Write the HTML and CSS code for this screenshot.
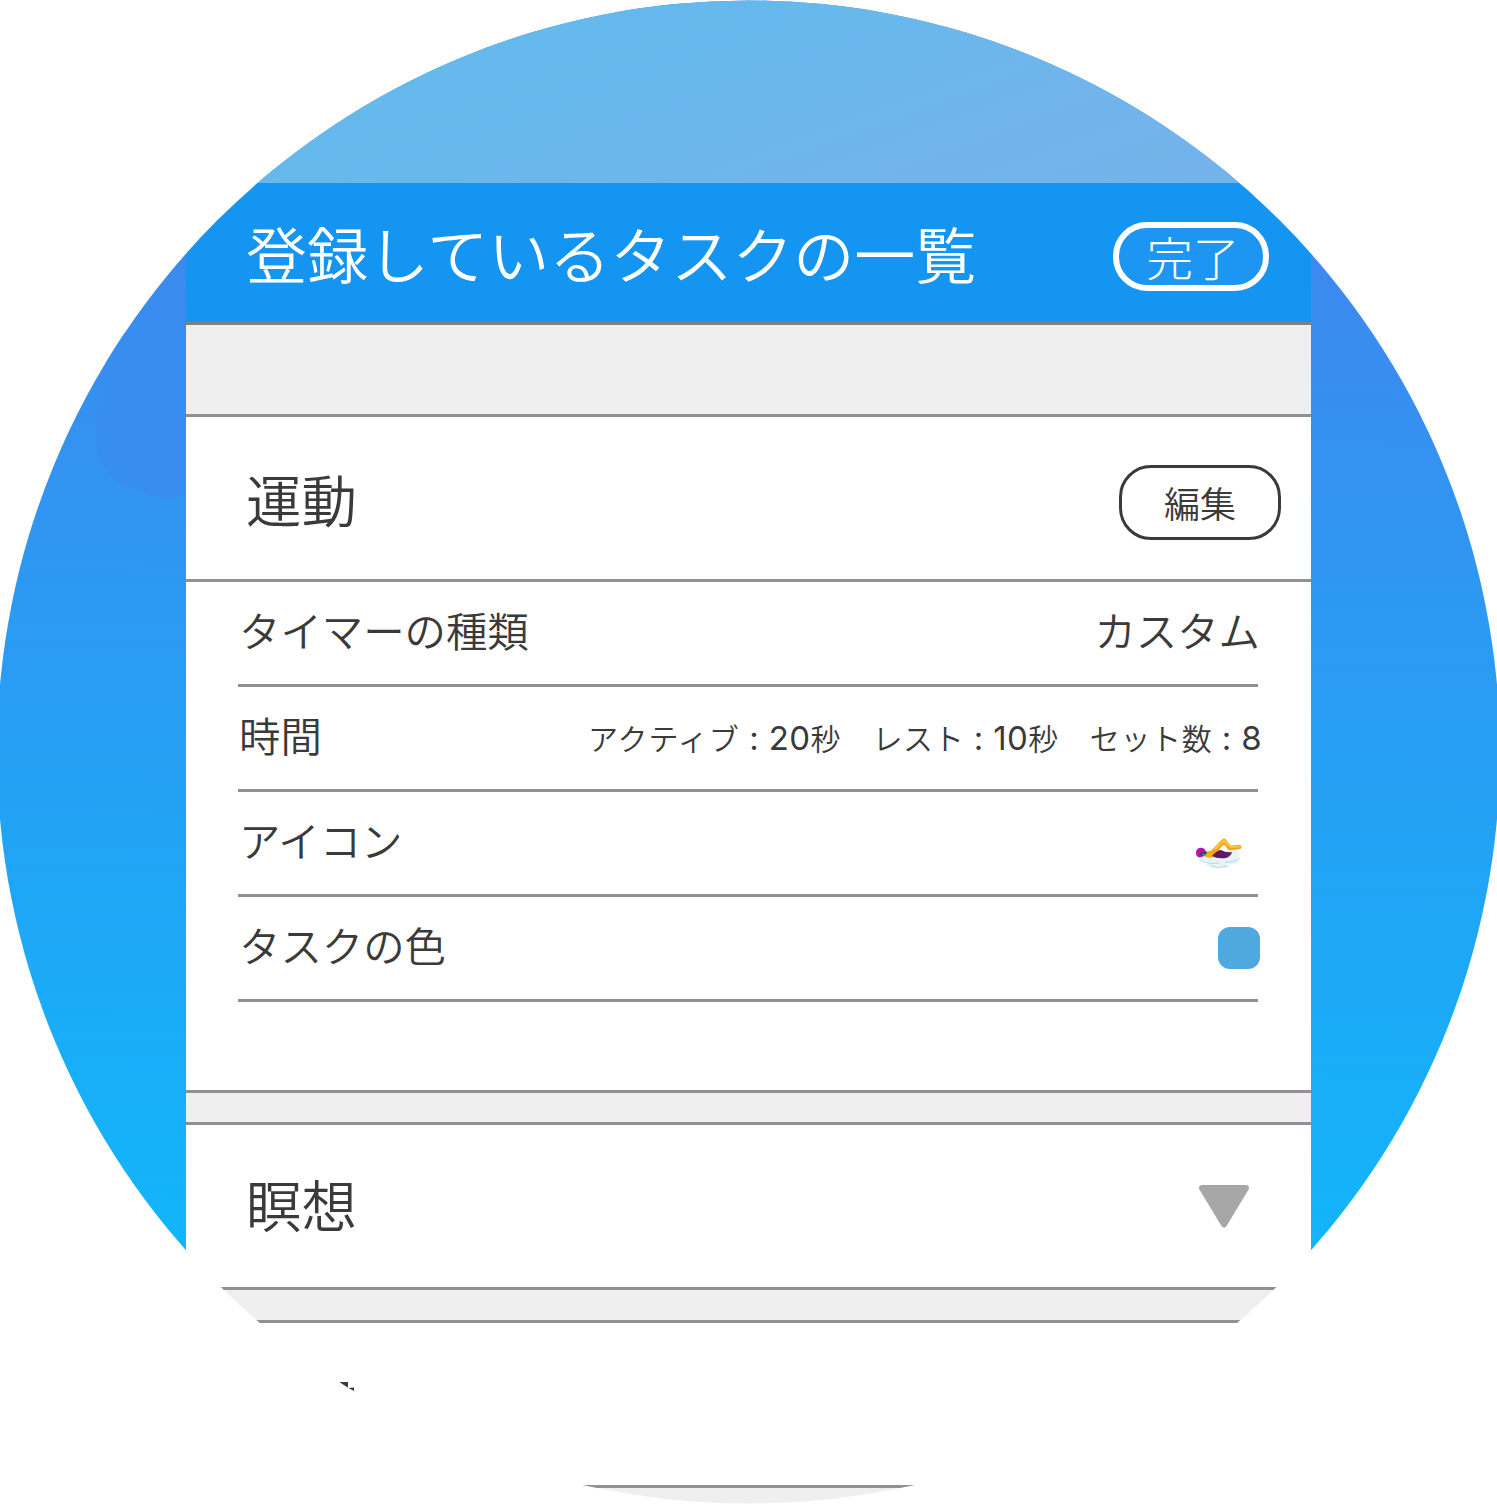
FILE: index.html
```html
<!DOCTYPE html>
<html lang="ja">
<head>
<meta charset="utf-8">
<title>登録しているタスクの一覧</title>
<link rel="stylesheet" href="styles.css">
</head>
<body>
<div class="stage">
  <svg class="blob" viewBox="0 0 90 200" aria-hidden="true"><path d="M14 0C8 50 0 60 0 100C0 128 14 150 34 154C44 153 48 165 70 166C80 166 84 162 90 161V0Z"/></svg>
  <div class="status"></div>
  <main class="phone">
    <header class="bar">
      <h1>登録しているタスクの一覧</h1>
      <button class="done">完了</button>
    </header>
    <div class="gap gap-top"></div>
    <section class="task">
      <div class="task-head"><h2>運動</h2><button class="edit">編集</button></div>
      <div class="details">
        <div class="row"><span class="label">タイマーの種類</span><span class="value">カスタム</span></div>
        <div class="row"><span class="label">時間</span>
          <span class="times"><span class="active">アクティブ<b class="colon">:</b><b>20</b>秒</span><span>レスト<b class="colon">:</b><b>10</b>秒</span><span>セット数<b class="colon">:</b><b>8</b></span></span></div>
        <div class="row"><span class="label">アイコン</span>
          <svg class="swimmer" viewBox="0 0 46 32" aria-hidden="true">
            <path d="M1 19Q8 16 13 18L35 12Q44 13 44 17Q39 21 44 24Q38 27 30 26Q36 29 30 30Q15 31 8 26Q12 26 14 24Q4 23 1 19Z" fill="#e6f3f8"/>
            <path d="M4 22Q13 27 23 25M14 28Q22 31 31 28M29 24Q38 25 44 20" fill="none" stroke="#b9d9e6" stroke-width="1"/>
            <path d="M9 13L17 13L23 11L26 14L18 19Q12 21 8 18Z" fill="#f7ad18"/>
            <path d="M17 14L28 3L34 10L43 9" fill="none" stroke="#f2a41a" stroke-width="4.6" stroke-linecap="round" stroke-linejoin="round"/>
            <path d="M19 11L28 2.5L34.500 9L43 8.500" fill="none" stroke="#ffc832" stroke-width="1.800" stroke-linecap="round" stroke-linejoin="round"/>
            <path d="M16 18Q20 13 25 12Q30 15 36 14Q35 18 30 20Q21 21 16 18Z" fill="#60195f"/>
            <path d="M0 14Q1 9 7 10Q11 12 9 17Q6 20 2 19Q0 18 0 14Z" fill="#bd10ad"/>
            <path d="M4 16L9 13L11 15L8 18L4 17Z" fill="#28435b"/><path d="M6 17L8 15L9 18Z" fill="#2eb7ca"/>
          </svg></div>
        <div class="row"><span class="label">タスクの色</span><span class="swatch"></span></div>
      </div>
    </section>
    <div class="gap gap-mid"></div>
    <section class="task collapsed">
      <div class="task-head"><h2>瞑想</h2>
        <svg class="chevron" viewBox="0 0 50 43" aria-hidden="true"><path d="M3 3H47L25 39.5Z" fill="#a7a7a7" stroke="#a7a7a7" stroke-width="6" stroke-linejoin="round"/></svg></div>
    </section>
    <div class="gap gap-low"></div>
    <section class="task next">
      <svg class="fragment" viewBox="0 0 20 12" aria-hidden="true"><path d="M0 0H9V6Z M9 6L15 5.5V9Z" fill="#3a3a3a"/></svg>
    </section>
    <div class="gap gap-end"></div>
  </main>
</div>
</body>
</html>
```
FILE: styles.css
```css
* { box-sizing: border-box; }
body { margin: 0; background: #fff; color: #3a3a3a; font-family: "Noto Sans CJK JP", sans-serif; font-weight: 350; overflow: hidden; }
h1, h2 { margin: 0; font-weight: 350; }
button { font: inherit; color: inherit; background: none; padding: 0; }
.stage {
  position: relative; width: 1497px; height: 1504px;
  clip-path: circle(751.5px at 748.5px 752px);
  background: linear-gradient(181deg, #3d88ef 250px, #3492f1 460px, #24a1f4 800px, #12b5fb 1250px) 0 0 / 100% 1252px no-repeat;
}
.blob { position: absolute; left: 96px; top: 333px; width: 90px; height: 200px; fill: #388ef0; }
.status { height: 183px; background: linear-gradient(160deg, #62baeb 20%, #68b8ec 45%, #70b5ec 65%, #75b2ea 90%); }
.phone { position: relative; width: 1125px; height: 1321px; margin: 0 auto; background: #fff; display: flex; flex-direction: column; }
.bar { height: 142px; flex: none; display: flex; align-items: center; justify-content: space-between; padding: 0 42px 0 60px; background: #1495f1; border-bottom: 3px solid #808080; color: #fff; }
.bar h1 { font-size: 61px; line-height: 139px; }
.done { width: 156px; height: 69px; margin-top: 8px; border: 6px solid #fff; border-radius: 34px; font-size: 46.5px; font-weight: 300; line-height: 46px; padding: 0 0 2px 4px; background: #1d95f2; }
.gap { flex: none; background: #efefef; border-bottom: 3px solid #919191; }
.gap-top { height: 92px; }
.gap-mid { height: 35px; border-top: 3px solid #919191; }
.gap-low { height: 36px; border-top: 3px solid #919191; }
.gap-end { height: 19px; border-top: 3px solid #919191; border-bottom: 0; }
.task { flex: none; }
.task-head { height: 165px; display: flex; align-items: center; justify-content: space-between; padding: 0 30px 0 60px; border-bottom: 3px solid #919191; }
.task-head h2 { font-size: 55.5px; line-height: 160px; }
.edit { width: 162px; height: 75px; margin-top: 9px; border: 3px solid #3a3a3a; border-radius: 32px; font-size: 36px; line-height: 66px; padding-bottom: 2px; }
.details { height: 508px; padding: 0 53px 0 52px; }
.row { height: 105px; display: flex; align-items: center; justify-content: space-between; border-bottom: 3px solid #919191; font-size: 41.4px; line-height: 95px; padding-bottom: 7px; }
.label { padding-left: 1px; }
.value { margin-right: -2px; }
.times { display: flex; gap: 31px; font-size: 30px; letter-spacing: .6px; margin: 7px -4px 0 0; }
.times .active { letter-spacing: 1px; }
.times b { font: 400 33px/95px Inter, sans-serif; letter-spacing: .4px; }
.times .colon { padding: 0 9.5px; }
.swimmer { width: 46px; height: 32px; margin: 29px 16px 0 0; }
.swatch { width: 42px; height: 42px; margin: 7px -2px 0 0; border-radius: 12px; background: #50a8e0; }
.collapsed .task-head { height: 162px; border: 0; padding-right: 62px; }
.collapsed h2 { margin-top: -6px; }
.chevron { width: 50px; height: 43px; }
.next { height: 162px; padding: 59px 0 0 153px; }
.fragment { display: block; width: 20px; height: 12px; }
```
